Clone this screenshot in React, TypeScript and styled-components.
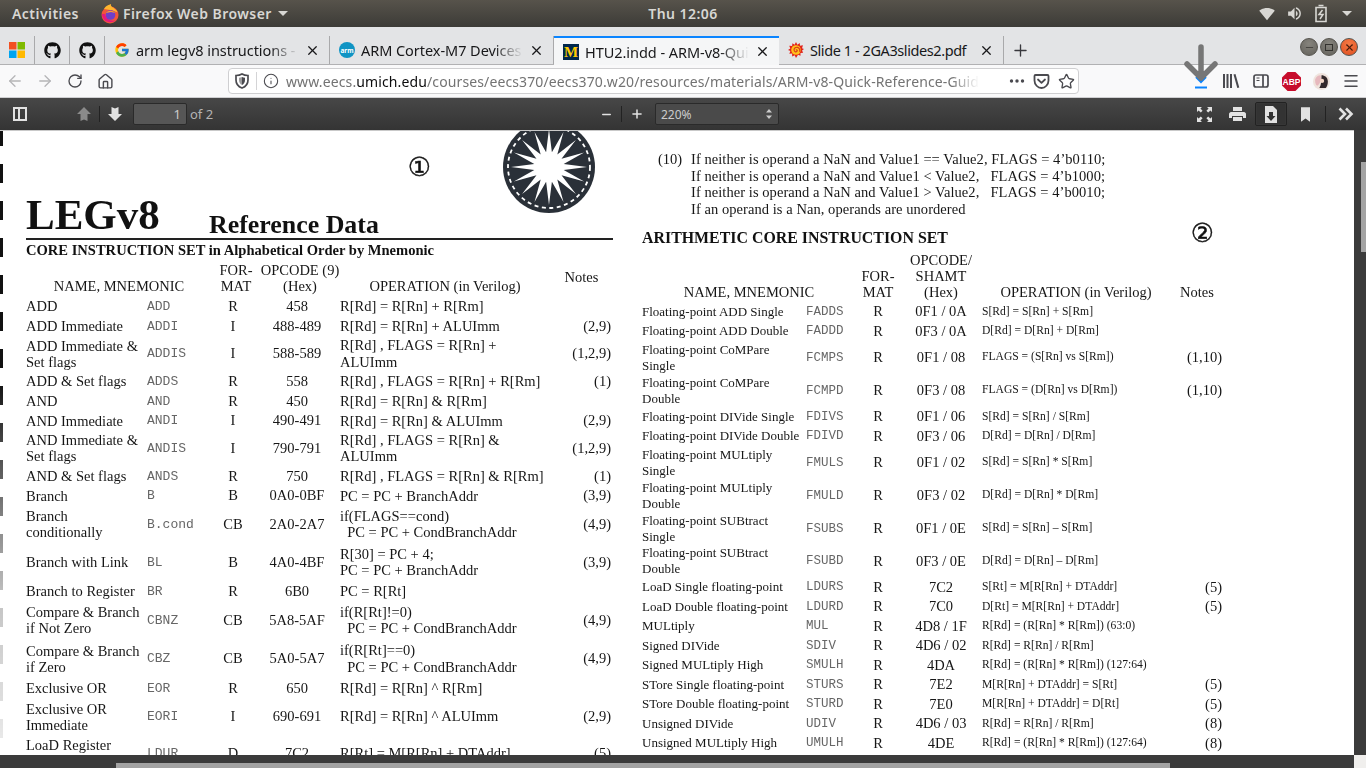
import React from "react";
import styled, { createGlobalStyle } from "styled-components";
import { FaGithub } from "react-icons/fa";
import { FcGoogle } from "react-icons/fc";
import { MdSignalWifi4Bar, MdVolumeUp } from "react-icons/md";
import { ArrowLeft, ArrowRight, Home, Info, Menu, RotateCw, Star, X, Plus, Minus } from "lucide-react";

const SERIF = `"Liberation Serif", "Times New Roman", serif`;
const MONO = `"Liberation Mono", "Courier New", monospace`;
const UI = `"Noto Sans", "Open Sans", sans-serif`;

const GlobalStyle = createGlobalStyle`
  html, body { margin: 0; padding: 0; overflow: hidden; background: #fff; }
  * { box-sizing: border-box; }
`;

const Screen = styled.div`
  width: 1366px;
  height: 768px;
  display: flex;
  flex-direction: column;
  overflow: hidden;
  position: relative;
  font-family: ${UI};
`;

/* ---------- ubuntu top bar ---------- */
const TopBar = styled.div`
  height: 27px;
  flex: none;
  display: grid;
  grid-template-columns: 1fr auto 1fr;
  align-items: center;
  padding: 0 12px;
  background: linear-gradient(#57534b, #3c3b37);
  color: #d8d7d3;
  font-size: 14px;
  font-weight: 600;
  letter-spacing: 0.45px;
`;

const TopLeft = styled.div`
  display: flex;
  align-items: center;
`;

const FoxLabel = styled.span`
  margin-left: 21px;
  display: flex;
  align-items: center;
  gap: 3px;
`;

const TopRight = styled.div`
  display: flex;
  justify-content: flex-end;
  align-items: center;
  gap: 11px;
  padding-right: 2px;
`;

const Caret = styled.span`
  width: 0;
  height: 0;
  margin-left: 3px;
  border-left: 5px solid transparent;
  border-right: 5px solid transparent;
  border-top: 5px solid #d8d7d3;
`;

/* ---------- firefox tabs ---------- */
const TabStrip = styled.div`
  height: 38px;
  flex: none;
  display: flex;
  align-items: flex-end;
  background: #e3e4e6;
  border-bottom: 1px solid #b1b1b3;
`;

const PinnedTab = styled.div`
  width: 35px;
  height: 28px;
  display: flex;
  align-items: center;
  justify-content: center;
  border-right: 1px solid #a9a9ab;
  color: #111;
`;

const Tab = styled.div<{ $active?: boolean; $w: number }>`
  width: ${(p) => p.$w}px;
  height: ${(p) => (p.$active ? 29 : 28)}px;
  margin-bottom: ${(p) => (p.$active ? -1 : 0)}px;
  display: flex;
  align-items: center;
  padding: 0 9px 0 9px;
  gap: 6px;
  font-size: 14.5px;
  color: #18181a;
  background: ${(p) => (p.$active ? "#f5f6f7" : "transparent")};
  border-top: ${(p) => (p.$active ? "2px solid #0a84ff" : "0")};
  border-right: ${(p) => (p.$active ? "0" : "1px solid #a9a9ab")};
`;

const TabTitle = styled.span<{ $fade?: boolean; $tight?: boolean }>`
  flex: 1;
  white-space: nowrap;
  overflow: hidden;
  letter-spacing: ${(p) => (p.$tight ? -0.42 : -0.05)}px;
  ${(p) =>
    p.$fade &&
    "mask-image: linear-gradient(to right, #000 82%, transparent 100%);"}
`;

const Favicon = styled.span`
  width: 16px;
  height: 16px;
  flex: none;
  display: flex;
  align-items: center;
  justify-content: center;
`;

const ArmIcon = styled(Favicon)`
  border-radius: 50%;
  background: #0f94c4;
  color: #fff;
  font-size: 6.5px;
  font-weight: 700;
`;

const MichiganIcon = styled(Favicon)`
  background: #00274c;
  color: #ffcb05;
  font-family: ${SERIF};
  font-size: 15px;
  font-weight: 700;
  line-height: 16px;
`;

const NewTab = styled.div`
  width: 32px;
  height: 28px;
  display: flex;
  align-items: center;
  justify-content: center;
  color: #38383d;
`;

const WindowButtons = styled.div`
  margin-left: auto;
  align-self: flex-start;
  display: flex;
  gap: 2px;
  margin-top: 11px;
  margin-right: 8px;
`;

const WindowButton = styled.div<{ $close?: boolean }>`
  width: 18px;
  height: 18px;
  border-radius: 50%;
  border: 1px solid #55534d;
  background: ${(p) =>
    p.$close
      ? "radial-gradient(circle at 50% 30%, #f47a45, #df4f20)"
      : "radial-gradient(circle at 50% 30%, #86847d, #63615b)"};
  display: flex;
  align-items: center;
  justify-content: center;
  color: ${(p) => (p.$close ? "#4a1c0c" : "#33322e")};
`;

const MaxGlyph = styled.span`
  width: 8px;
  height: 7px;
  border: 1px solid #33322e;
`;

/* ---------- navigation bar ---------- */
const NavBar = styled.div`
  height: 33px;
  flex: none;
  display: flex;
  align-items: center;
  background: #f9f9fa;
  border-bottom: 1px solid #cfcfd1;
`;

const NavButton = styled.div<{ $dim?: boolean }>`
  width: 30px;
  height: 30px;
  flex: none;
  display: flex;
  align-items: center;
  justify-content: center;
  color: ${(p) => (p.$dim ? "#b5b5b7" : "#4a4a4f")};
`;

const UrlBar = styled.div`
  width: 851px;
  height: 26px;
  margin-left: 108px;
  display: flex;
  align-items: center;
  background: #fff;
  border: 1px solid #cfcfd1;
  border-radius: 4px;
  color: #4a4a4f;
  padding: 0 1px 0 5px;
`;

const UrlIcon = styled.span`
  width: 16px;
  height: 16px;
  margin-left: 0;
  flex: none;
  display: flex;
  align-items: center;
  justify-content: center;
`;

const UrlDivider = styled.span`
  width: 1px;
  height: 18px;
  background: #d4d4d6;
  margin: 0 6px 0 6px;
`;

const UrlText = styled.div`
  width: 693px;
  margin-left: 7px;
  white-space: nowrap;
  overflow: hidden;
  font-size: 14px;
  letter-spacing: 0.12px;
  color: #737373;
  mask-image: linear-gradient(to right, #000 96%, transparent 100%);
  b {
    font-weight: 400;
    color: #0c0c0d;
  }
`;

const UrlActions = styled.div`
  margin-left: auto;
  display: flex;
  align-items: center;
  gap: 8px;
  padding-right: 2px;
`;

const NavRight = styled.div`
  margin-left: auto;
  display: flex;
  align-items: center;
`;

/* overlay arrow pasted on the screenshot */
const PointerArrow = styled.svg`
  position: absolute;
  left: 1181px;
  top: 42px;
`;

/* ---------- pdf.js toolbar ---------- */
const PdfToolbar = styled.div`
  height: 32px;
  flex: none;
  display: flex;
  align-items: center;
  padding: 0 5px;
  background: linear-gradient(#474747, #343434);
  color: #e2e2e2;
`;

const ToolButton = styled.div<{ $boxed?: boolean; $w?: number }>`
  width: ${(p) => p.$w ?? 30}px;
  height: 24px;
  flex: none;
  display: flex;
  align-items: center;
  justify-content: center;
  border-radius: 2px;
  ${(p) =>
    p.$boxed &&
    "border: 1px solid #222; background: #333; box-shadow: inset 0 0 1px #555;"}
`;

const ToolDivider = styled.span`
  width: 1px;
  height: 16px;
  flex: none;
  background: #222;
`;

const WideDivider = styled(ToolDivider)`
  margin: 0 2px 0 2px;
`;

const PageGroup = styled.div`
  width: 522px;
  margin-left: 34px;
  display: flex;
  align-items: center;
`;

const PageInput = styled.div`
  width: 54px;
  height: 22px;
  margin-left: 3px;
  padding-right: 5px;
  text-align: right;
  line-height: 20px;
  font-size: 13px;
  color: #ccc;
  background: #565656;
  border: 1px solid #2a2a2a;
  border-radius: 2px;
`;

const PageCount = styled.span`
  margin-left: 3px;
  font-size: 13px;
  color: #b4b4b4;
`;

const ZoomGroup = styled.div`
  display: flex;
  align-items: center;
`;

const ZoomSelect = styled.div`
  width: 124px;
  height: 22px;
  margin-left: 3px;
  padding: 0 5px;
  display: flex;
  align-items: center;
  justify-content: space-between;
  font-size: 12px;
  color: #ccc;
  background: #4a4a4a;
  border: 1px solid #2a2a2a;
  border-radius: 2px;
`;

const RightTools = styled.div`
  margin-left: auto;
  display: flex;
  align-items: center;
  gap: 3px;
`;

/* ---------- document ---------- */
const Viewer = styled.div`
  flex: 1;
  min-height: 0;
  display: flex;
`;

const Sheet = styled.div`
  flex: 1;
  position: relative;
  display: flex;
  overflow: hidden;
  background: #fff;
  border-top: 1px solid #c9c9c9;
  font-family: ${SERIF};
  font-size: 14.5px;
  color: #161616;

  &::before {
    content: "";
    position: absolute;
    left: 0;
    top: -4px;
    bottom: 0;
    width: 2.5px;
    background: repeating-linear-gradient(#111 0 19px, transparent 19px 37px);
    mask-image: linear-gradient(#000 40%, rgba(0, 0, 0, 0.25) 75%, rgba(0, 0, 0, 0.08));
  }
`;

const LeftPage = styled.div`
  width: 642px;
  flex: none;
  padding: 0 29px 0 26px;
  filter: blur(0.3px);
`;

const RightPage = styled.div`
  flex: 1;
  padding-top: 20px;
  filter: blur(0.3px);
`;

const SealRow = styled.div`
  height: 69px;
  display: flex;
  justify-content: flex-end;
  gap: 72px;
  padding-right: 18px;
`;

const CircledDigit = styled.span`
  font-family: "DejaVu Sans", sans-serif;
  font-size: 26px;
  line-height: 24px;
  color: #111;
  -webkit-text-stroke: 0.4px #111;
`;

const FirstDigit = styled(CircledDigit)`
  margin-top: 24px;
`;

const SecondDigit = styled(CircledDigit)`
  margin-top: -8px;
`;

const Seal = styled.svg`
  flex: none;
`;

const TitleRow = styled.div`
  height: 40px;
  display: flex;
  align-items: flex-end;
  border-bottom: 2px solid #222;
  color: #111;
`;

const BigTitle = styled.span`
  width: 183px;
  font-size: 43px;
  font-weight: 700;
  line-height: 40px;
  margin-bottom: 3px;
`;

const SubTitle = styled.span`
  font-size: 25.9px;
  font-weight: 700;
  line-height: 27px;
`;

const SectionTitle = styled.div`
  height: 19px;
  line-height: 21px;
  font-size: 14.55px;
  font-weight: 700;
  color: #111;
`;

const Grid = styled.div<{ $cols: string }>`
  display: grid;
  grid-template-columns: ${(p) => p.$cols};
`;

const LEFT_COLS = "121px 65px 42px 86px 210px 63px";
const RIGHT_COLS = "164px 50px 44px 82px 188px 54px";

const HeadRow = styled(Grid)<{ $h: number }>`
  height: ${(p) => p.$h}px;
  align-items: end;
  text-align: center;
  line-height: 16px;
  padding-bottom: 2px;
  white-space: nowrap;
`;

const HeadName = styled.div`
  grid-column: span 2;
`;

// the two narrow heads sit a little right of the values below them
const HeadStack = styled.div<{ $shift?: number }>`
  padding-left: ${(p) => p.$shift ?? 0}px;
`;

const HeadNotes = styled.div<{ $middle?: boolean }>`
  ${(p) => p.$middle && "align-self: center;"}
`;

const Row = styled(Grid)<{ $h: number }>`
  height: ${(p) => p.$h}px;
  align-items: center;
`;

const NameCell = styled.div<{ $small?: boolean }>`
  white-space: pre;
  line-height: 16px;
  font-size: ${(p) => (p.$small ? 13 : 14.5)}px;
`;

const MnemonicCell = styled.div<{ $small?: boolean }>`
  font-family: ${MONO};
  font-size: ${(p) => (p.$small ? 12.5 : 13)}px;
  color: #666;
`;

const CenterCell = styled.div`
  text-align: center;
`;

const OpCell = styled.div<{ $small?: boolean }>`
  white-space: pre;
  line-height: 16.5px;
  font-size: ${(p) => (p.$small ? 11.6 : 14.5)}px;
`;

const NotesCell = styled.div`
  text-align: right;
  padding-right: 2px;
`;

const Footnote = styled.div`
  display: flex;
  padding-left: 16px;
  line-height: 16.5px;
`;

const FootnoteMark = styled.span`
  width: 33px;
`;

const FootnoteLine = styled.div`
  white-space: pre;
  letter-spacing: 0.06px;
`;

const ArithHead = styled.div`
  width: 572px;
  height: 18px;
  margin-top: 12px;
  display: flex;
  justify-content: space-between;
  align-items: flex-start;
`;

const ArithTitle = styled.span`
  font-size: 15.9px;
  font-weight: 700;
  line-height: 18px;
  color: #111;
`;

/* ---------- scrollbars ---------- */
const VScroll = styled.div`
  width: 12px;
  flex: none;
  padding: 32px 0 0 7px;
  background: #3b3b3b;
`;

const VThumb = styled.div`
  height: 90px;
  background: #a3a3a3;
`;

const HScroll = styled.div`
  height: 13px;
  flex: none;
  display: flex;
  background: #3b3b3b;
`;

const HTrack = styled.div`
  flex: 1;
  padding: 8px 0 0 116px;
`;

const HThumb = styled.div`
  width: 1054px;
  height: 5px;
  background: #a3a3a3;
`;

const ScrollCorner = styled.div`
  width: 12px;
  background: #f0efed;
`;

type Entry = {
  name: string;
  mn: string;
  fmt: string;
  code: string;
  op: string;
  notes?: string;
  h: number;
};

const CORE: Entry[] = [
  { name: "ADD", mn: "ADD", fmt: "R", code: "458", op: "R[Rd] = R[Rn] + R[Rm]", h: 20 },
  { name: "ADD Immediate", mn: "ADDI", fmt: "I", code: "488-489", op: "R[Rd] = R[Rn] + ALUImm", notes: "(2,9)", h: 20 },
  { name: "ADD Immediate &\nSet flags", mn: "ADDIS", fmt: "I", code: "588-589", op: "R[Rd] , FLAGS = R[Rn] +\nALUImm", notes: "(1,2,9)", h: 35 },
  { name: "ADD & Set flags", mn: "ADDS", fmt: "R", code: "558", op: "R[Rd] , FLAGS = R[Rn] + R[Rm]", notes: "(1)", h: 20 },
  { name: "AND", mn: "AND", fmt: "R", code: "450", op: "R[Rd] = R[Rn] & R[Rm]", h: 20 },
  { name: "AND Immediate", mn: "ANDI", fmt: "I", code: "490-491", op: "R[Rd] = R[Rn] & ALUImm", notes: "(2,9)", h: 19.5 },
  { name: "AND Immediate &\nSet flags", mn: "ANDIS", fmt: "I", code: "790-791", op: "R[Rd] , FLAGS = R[Rn] &\nALUImm", notes: "(1,2,9)", h: 35.5 },
  { name: "AND & Set flags", mn: "ANDS", fmt: "R", code: "750", op: "R[Rd] , FLAGS = R[Rn] & R[Rm]", notes: "(1)", h: 20 },
  { name: "Branch", mn: "B", fmt: "B", code: "0A0-0BF", op: "PC = PC + BranchAddr", notes: "(3,9)", h: 19.5 },
  { name: "Branch\nconditionally", mn: "B.cond", fmt: "CB", code: "2A0-2A7", op: "if(FLAGS==cond)\n  PC = PC + CondBranchAddr", notes: "(4,9)", h: 37.5 },
  { name: "Branch with Link", mn: "BL", fmt: "B", code: "4A0-4BF", op: "R[30] = PC + 4;\nPC = PC + BranchAddr", notes: "(3,9)", h: 38 },
  { name: "Branch to Register", mn: "BR", fmt: "R", code: "6B0", op: "PC = R[Rt]", h: 20 },
  { name: "Compare & Branch\nif Not Zero", mn: "CBNZ", fmt: "CB", code: "5A8-5AF", op: "if(R[Rt]!=0)\n  PC = PC + CondBranchAddr", notes: "(4,9)", h: 38 },
  { name: "Compare & Branch\nif Zero", mn: "CBZ", fmt: "CB", code: "5A0-5A7", op: "if(R[Rt]==0)\n  PC = PC + CondBranchAddr", notes: "(4,9)", h: 39 },
  { name: "Exclusive OR", mn: "EOR", fmt: "R", code: "650", op: "R[Rd] = R[Rn] ^ R[Rm]", h: 20 },
  { name: "Exclusive OR\nImmediate", mn: "EORI", fmt: "I", code: "690-691", op: "R[Rd] = R[Rn] ^ ALUImm", notes: "(2,9)", h: 37 },
  { name: "LoaD Register\nUnscaled offset", mn: "LDUR", fmt: "D", code: "7C2", op: "R[Rt] = M[R[Rn] + DTAddr]", notes: "(5)", h: 36 },
];

const ARITH: Entry[] = [
  { name: "Floating-point ADD Single", mn: "FADDS", fmt: "R", code: "0F1 / 0A", op: "S[Rd] = S[Rn] + S[Rm]", h: 19.5 },
  { name: "Floating-point ADD Double", mn: "FADDD", fmt: "R", code: "0F3 / 0A", op: "D[Rd] = D[Rn] + D[Rm]", h: 19.5 },
  { name: "Floating-point CoMPare\nSingle", mn: "FCMPS", fmt: "R", code: "0F1 / 08", op: "FLAGS = (S[Rn] vs S[Rm])", notes: "(1,10)", h: 33 },
  { name: "Floating-point CoMPare\nDouble", mn: "FCMPD", fmt: "R", code: "0F3 / 08", op: "FLAGS = (D[Rn] vs D[Rm])", notes: "(1,10)", h: 33 },
  { name: "Floating-point DIVide Single", mn: "FDIVS", fmt: "R", code: "0F1 / 06", op: "S[Rd] = S[Rn] / S[Rm]", h: 19.5 },
  { name: "Floating-point DIVide Double", mn: "FDIVD", fmt: "R", code: "0F3 / 06", op: "D[Rd] = D[Rn] / D[Rm]", h: 19.5 },
  { name: "Floating-point MULtiply\nSingle", mn: "FMULS", fmt: "R", code: "0F1 / 02", op: "S[Rd] = S[Rn] * S[Rm]", h: 33 },
  { name: "Floating-point MULtiply\nDouble", mn: "FMULD", fmt: "R", code: "0F3 / 02", op: "D[Rd] = D[Rn] * D[Rm]", h: 33 },
  { name: "Floating-point SUBtract\nSingle", mn: "FSUBS", fmt: "R", code: "0F1 / 0E", op: "S[Rd] = S[Rn] \u2013 S[Rm]", h: 33 },
  { name: "Floating-point SUBtract\nDouble", mn: "FSUBD", fmt: "R", code: "0F3 / 0E", op: "D[Rd] = D[Rn] \u2013 D[Rm]", h: 32.5 },
  { name: "LoaD Single floating-point", mn: "LDURS", fmt: "R", code: "7C2", op: "S[Rt] = M[R[Rn] + DTAddr]", notes: "(5)", h: 19.5 },
  { name: "LoaD Double floating-point", mn: "LDURD", fmt: "R", code: "7C0", op: "D[Rt] = M[R[Rn] + DTAddr]", notes: "(5)", h: 19.5 },
  { name: "MULtiply", mn: "MUL", fmt: "R", code: "4D8 / 1F", op: "R[Rd] = (R[Rn] * R[Rm]) (63:0)", h: 19.5 },
  { name: "Signed DIVide", mn: "SDIV", fmt: "R", code: "4D6 / 02", op: "R[Rd] = R[Rn] / R[Rm]", h: 19.5 },
  { name: "Signed MULtiply High", mn: "SMULH", fmt: "R", code: "4DA", op: "R[Rd] = (R[Rn] * R[Rm]) (127:64)", h: 19.5 },
  { name: "STore Single floating-point", mn: "STURS", fmt: "R", code: "7E2", op: "M[R[Rn] + DTAddr] = S[Rt]", notes: "(5)", h: 19.5 },
  { name: "STore Double floating-point", mn: "STURD", fmt: "R", code: "7E0", op: "M[R[Rn] + DTAddr] = D[Rt]", notes: "(5)", h: 19.5 },
  { name: "Unsigned DIVide", mn: "UDIV", fmt: "R", code: "4D6 / 03", op: "R[Rd] = R[Rn] / R[Rm]", notes: "(8)", h: 19.5 },
  { name: "Unsigned MULtiply High", mn: "UMULH", fmt: "R", code: "4DE", op: "R[Rd] = (R[Rn] * R[Rm]) (127:64)", notes: "(8)", h: 19.5 },
];

// 16 point star for the seal
const starPoints = Array.from({ length: 32 }, (_, i) => {
  const r = i % 2 === 0 ? 38 : 15;
  const a = (i * Math.PI) / 16 - Math.PI / 2;
  return `${(46 + r * Math.cos(a)).toFixed(1)},${(46 + r * Math.sin(a)).toFixed(1)}`;
}).join(" ");

const FirefoxLogo = () => (
  <svg width="20" height="20" viewBox="0 0 20 20">
    <circle cx="10" cy="11" r="8.5" fill="#f0553a" />
    <path d="M4 5 C6 1 9 1 11 0 C10 3 14 3 17 7 C18 10 14 6 10 6 Z" fill="#ffb52e" />
    <path d="M2 10 C2 17 10 21 16 16 C11 18 6 15 5 10 Z" fill="#e5197d" />
    <circle cx="10.5" cy="11" r="4.8" fill="#6e3fc9" />
    <path d="M6 9 C8 6 13 6 15 9 L11 8 Z" fill="#ff9a2e" />
  </svg>
);

const BatteryIcon = () => (
  <svg width="14" height="19" viewBox="0 0 14 19" fill="none" stroke="#d8d7d3" strokeWidth="1.6">
    <path d="M4.5 1.5h5M2 3.5h10v14H2z" />
    <path d="M8.5 6 L5 10.5h4L6 15" strokeWidth="1.5" />
  </svg>
);

const MicrosoftIcon = () => (
  <svg width="16" height="16" viewBox="0 0 16 16">
    <rect width="7.5" height="7.5" fill="#f25022" />
    <rect x="8.5" width="7.5" height="7.5" fill="#7fba00" />
    <rect y="8.5" width="7.5" height="7.5" fill="#00a4ef" />
    <rect x="8.5" y="8.5" width="7.5" height="7.5" fill="#ffb900" />
  </svg>
);

const SlideIcon = () => (
  <svg width="18" height="18" viewBox="0 0 18 18">
    <path
      d="M9 0l1.6 3 2.6-2 .3 3.3 3.300-.6-1 3.200 2.200 1.100-2.200 1.700 1.200 2.500-3 .2.100 3.100-2.800-1.200L9 18l-1.500-3.200-2.800 1.500-.1-3.300-3.100.1 1.200-2.900L0 9l2.600-1.700-1.200-3 3.200.2L5 1.500l2.400 1.700z"
      fill="#e2231a"
    />
    <circle cx="9" cy="9" r="5.400" fill="#ffc21a" />
    <path d="M9 9c1-1 2 .5 1 1.500S7 11 6.800 9s2-3.500 4-3 3 3 2.200 5" fill="none" stroke="#d9381e" strokeWidth="1.300" />
  </svg>
);

const ShieldIcon = () => (
  <svg width="16" height="16" viewBox="0 0 16 16">
    <path d="M8 1 C10 2.200 12 2.500 14 2.500 V7 C14 11 11.500 13.800 8 15 C4.500 13.800 2 11 2 7 V2.500 C4 2.500 6 2.200 8 1 Z" fill="none" stroke="#4a4a4f" strokeWidth="1.700" />
    <path d="M8 4 C9 4.500 10 4.800 11 4.800 V7 C11 9.500 9.800 11 8 12 Z" fill="#4a4a4f" />
    <path d="M8 4 C7 4.500 6 4.800 5 4.800 V7 C5 9.500 6.200 11 8 12 Z" fill="#4a4a4f" opacity=".55" />
  </svg>
);

const DotsIcon = () => (
  <svg width="16" height="16" viewBox="0 0 16 16" fill="#4a4a4f">
    <circle cx="2.500" cy="8" r="1.700" />
    <circle cx="8" cy="8" r="1.700" />
    <circle cx="13.500" cy="8" r="1.700" />
  </svg>
);

const PocketIcon = () => (
  <svg width="17" height="17" viewBox="0 0 17 17" fill="none" stroke="#4a4a4f" strokeWidth="1.800">
    <path d="M2.500 2h12c.6 0 1 .4 1 1v4.500c0 4-3.200 7.500-7 7.500s-7-3.500-7-7.500V3c0-.6.400-1 1-1z" />
    <path d="M5 6.500l3.500 3.300L12 6.500" strokeLinecap="round" strokeLinejoin="round" />
  </svg>
);

const DownloadIcon = () => (
  <svg width="16" height="16" viewBox="0 0 16 16" fill="none" stroke="#0a84ff">
    <path d="M3 4l5 5 5-5" strokeWidth="2" />
    <path d="M2 14.500h12" strokeWidth="2" />
  </svg>
);

const LibraryIcon = () => (
  <svg width="18" height="16" viewBox="0 0 18 16" fill="#4a4a4f">
    <rect x="1" y="1" width="2" height="14" />
    <rect x="4.500" y="1" width="2" height="14" />
    <rect x="8" y="1" width="2" height="14" />
    <path d="M11.500 1.500l2-.6 3.800 13.600-2 .6z" />
  </svg>
);

const SidebarIcon = () => (
  <svg width="16" height="16" viewBox="0 0 16 16" fill="none" stroke="#4a4a4f" strokeWidth="1.700">
    <rect x="1" y="2" width="14" height="12" rx="2" />
    <path d="M10 2v12" />
    <path d="M3.500 5h3M3.500 7.500h3" strokeWidth="1" />
  </svg>
);

const AbpIcon = () => (
  <svg width="19" height="19" viewBox="0 0 17 17">
    <path d="M5 0h7l5 5v7l-5 5H5l-5-5V5z" fill="#c70d2c" />
    <text x="8.500" y="11.300" textAnchor="middle" fontSize="7.600" fontWeight="700" fontFamily="Liberation Sans, sans-serif" fill="#fff">
      ABP
    </text>
  </svg>
);

const AvatarIcon = () => (
  <svg width="17" height="17" viewBox="0 0 16 16">
    <circle cx="8" cy="8" r="8" fill="#efe3dc" />
    <path d="M8 2c3 0 6 2 6 6 0 3-1 5-2 6H6c2-3 2-8 2-12z" fill="#33282a" />
    <path d="M2 6c1-3 3-4 5-4 1 3 0 8-3 10-2-1-2-4-2-6z" fill="#e6b8bd" />
    <circle cx="8.500" cy="7.500" r="2" fill="#f2d6c6" />
  </svg>
);

const SidebarToggleIcon = () => (
  <svg width="16" height="16" viewBox="0 0 16 16">
    <path d="M1 1h14v14H1z M3 3v10h3V3z M8 3v10h5V3z" fill="#e2e2e2" fillRule="evenodd" />
  </svg>
);

const PageArrow = ({ up }: { up?: boolean }) => (
  <svg width="16" height="16" viewBox="0 0 16 16">
    <path
      d={up ? "M8 1l7 7h-3.500v7L8 13.500 4.500 15V8H1z" : "M8 15L1 8h3.500V1L8 2.500 11.500 1v7H15z"}
      fill={up ? "#8a8a8a" : "#e2e2e2"}
    />
  </svg>
);

const FullscreenIcon = () => (
  <svg width="15" height="15" viewBox="0 0 15 15" fill="#e2e2e2">
    <path d="M0 0h5L3.400 1.600 5.600 3.800 3.800 5.600 1.600 3.400 0 5z" />
    <path d="M15 0v5l-1.600-1.600-2.200 2.200-1.800-1.800 2.200-2.200L10 0z" />
    <path d="M0 15v-5l1.600 1.600 2.200-2.200 1.800 1.800-2.200 2.200L5 15z" />
    <path d="M15 15h-5l1.600-1.600-2.200-2.200 1.800-1.800 2.200 2.200L15 10z" />
  </svg>
);

const PrintIcon = () => (
  <svg width="17" height="16" viewBox="0 0 17 16" fill="#e2e2e2">
    <path d="M4 1h9v4H4z" />
    <path d="M2 6h13c1 0 2 1 2 2v4h-3v-2H3v2H0V8c0-1 1-2 2-2z" />
    <path d="M4 11h9v4H4z" />
  </svg>
);

const SaveIcon = () => (
  <svg width="14" height="17" viewBox="0 0 14 17">
    <path d="M1 0h8l4 4v13H1z" fill="#e2e2e2" />
    <path d="M5 6h4v4h2.500L7 15 2.500 10H5z" fill="#333" />
  </svg>
);

const BookmarkIcon = () => (
  <svg width="9" height="15" viewBox="0 0 10 16">
    <path d="M0 0h10v16L5 12.500 0 16z" fill="#e2e2e2" />
  </svg>
);

const DoubleChevron = () => (
  <svg width="16" height="14" viewBox="0 0 16 14" fill="none" stroke="#e2e2e2" strokeWidth="2.600">
    <path d="M1.500 1.500L7 7l-5.500 5.500" />
    <path d="M8 1.500L13.500 7 8 12.500" />
  </svg>
);

const UpDown = () => (
  <svg width="8" height="12" viewBox="0 0 8 12" fill="#ccc">
    <path d="M4 1l3 3.500H1zM4 11L1 7.500h6z" />
  </svg>
);

const rowsOf = (entries: Entry[], cols: string, small?: boolean) =>
  entries.map((e) => (
    <Row key={e.mn} $cols={cols} $h={e.h}>
      <NameCell $small={small}>{e.name}</NameCell>
      <MnemonicCell $small={small}>{e.mn}</MnemonicCell>
      <CenterCell>{e.fmt}</CenterCell>
      <CenterCell>{e.code}</CenterCell>
      <OpCell $small={small}>{e.op}</OpCell>
      <NotesCell>{e.notes}</NotesCell>
    </Row>
  ));

const App: React.FC = () => (
  <Screen>
    <GlobalStyle />
    <TopBar>
      <TopLeft>
        Activities
        <FoxLabel>
          <FirefoxLogo />
          Firefox Web Browser
          <Caret />
        </FoxLabel>
      </TopLeft>
      <span>Thu 12:06</span>
      <TopRight>
        <MdSignalWifi4Bar size={16} />
        <MdVolumeUp size={17} />
        <BatteryIcon />
        <Caret />
      </TopRight>
    </TopBar>

    <TabStrip>
      <PinnedTab>
        <MicrosoftIcon />
      </PinnedTab>
      <PinnedTab>
        <FaGithub size={17} />
      </PinnedTab>
      <PinnedTab>
        <FaGithub size={17} />
      </PinnedTab>
      <Tab $w={225}>
        <Favicon>
          <FcGoogle size={16} />
        </Favicon>
        <TabTitle $fade>arm legv8 instructions - Google Search</TabTitle>
        <X size={15} strokeWidth={2} />
      </Tab>
      <Tab $w={224}>
        <ArmIcon>arm</ArmIcon>
        <TabTitle $fade>ARM Cortex-M7 Devices Generic User Guide</TabTitle>
        <X size={15} strokeWidth={2} />
      </Tab>
      <Tab $w={225} $active>
        <MichiganIcon>M</MichiganIcon>
        <TabTitle $fade>HTU2.indd - ARM-v8-Quick-Reference-Guide</TabTitle>
        <X size={15} strokeWidth={2} />
      </Tab>
      <Tab $w={225}>
        <Favicon>
          <SlideIcon />
        </Favicon>
        <TabTitle $tight>Slide 1 - 2GA3slides2.pdf</TabTitle>
        <X size={15} strokeWidth={2} />
      </Tab>
      <NewTab>
        <Plus size={19} strokeWidth={1.7} />
      </NewTab>
      <WindowButtons>
        <WindowButton>
          <Minus size={11} strokeWidth={1.6} />
        </WindowButton>
        <WindowButton>
          <MaxGlyph />
        </WindowButton>
        <WindowButton $close>
          <X size={11} strokeWidth={2.4} />
        </WindowButton>
      </WindowButtons>
    </TabStrip>

    <NavBar>
      <NavButton $dim>
        <ArrowLeft size={18} strokeWidth={1.7} />
      </NavButton>
      <NavButton $dim>
        <ArrowRight size={18} strokeWidth={1.7} />
      </NavButton>
      <NavButton>
        <RotateCw size={16} strokeWidth={2} />
      </NavButton>
      <NavButton>
        <Home size={17} strokeWidth={2} />
      </NavButton>
      <UrlBar>
        <UrlIcon>
          <ShieldIcon />
        </UrlIcon>
        <UrlDivider />
        <UrlIcon>
          <Info size={16} strokeWidth={1.6} />
        </UrlIcon>
        <UrlText>
          www.eecs.<b>umich.edu</b>/courses/eecs370/eecs370.w20/resources/materials/ARM-v8-Quick-Reference-Guide.pdf
        </UrlText>
        <UrlActions>
          <DotsIcon />
          <PocketIcon />
          <Star size={17} strokeWidth={1.9} />
        </UrlActions>
      </UrlBar>
      <NavRight>
        <NavButton>
          <DownloadIcon />
        </NavButton>
        <NavButton>
          <LibraryIcon />
        </NavButton>
        <NavButton>
          <SidebarIcon />
        </NavButton>
        <NavButton>
          <AbpIcon />
        </NavButton>
        <NavButton>
          <AvatarIcon />
        </NavButton>
        <NavButton>
          <Menu size={18} strokeWidth={2} />
        </NavButton>
      </NavRight>
    </NavBar>

    <PointerArrow width="40" height="40" viewBox="0 0 40 40" fill="none" stroke="#767676" strokeWidth="5.500" strokeLinecap="round" strokeLinejoin="round">
      <path d="M20 5v31M6 22l14 14 14-14" />
    </PointerArrow>

    <PdfToolbar>
      <ToolButton>
        <SidebarToggleIcon />
      </ToolButton>
      <PageGroup>
        <ToolButton>
          <PageArrow up />
        </ToolButton>
        <ToolDivider />
        <ToolButton>
          <PageArrow />
        </ToolButton>
        <PageInput>1</PageInput>
        <PageCount>of 2</PageCount>
      </PageGroup>
      <ZoomGroup>
        <ToolButton>
          <Minus size={13} strokeWidth={2.6} />
        </ToolButton>
        <ToolDivider />
        <ToolButton>
          <Plus size={14} strokeWidth={2.6} />
        </ToolButton>
        <ZoomSelect>
          220%
          <UpDown />
        </ZoomSelect>
      </ZoomGroup>
      <RightTools>
        <ToolButton>
          <FullscreenIcon />
        </ToolButton>
        <ToolButton>
          <PrintIcon />
        </ToolButton>
        <ToolButton $boxed $w={32}>
          <SaveIcon />
        </ToolButton>
        <ToolButton>
          <BookmarkIcon />
        </ToolButton>
        <WideDivider />
        <ToolButton>
          <DoubleChevron />
        </ToolButton>
      </RightTools>
    </PdfToolbar>

    <Viewer>
      <Sheet>
        <LeftPage>
          <SealRow>
            <FirstDigit>{"\u2460"}</FirstDigit>
            <Seal width="92" height="82" viewBox="0 10 92 82">
              <circle cx="46" cy="46" r="46" fill="#2a3038" />
              <circle cx="46" cy="46" r="41" fill="none" stroke="#fff" strokeWidth="1.800" strokeDasharray="4 3.500" />
              <polygon points={starPoints} fill="#fff" />
            </Seal>
          </SealRow>
          <TitleRow>
            <BigTitle>LEGv8</BigTitle>
            <SubTitle>Reference Data</SubTitle>
          </TitleRow>
          <SectionTitle>CORE INSTRUCTION SET in Alphabetical Order by Mnemonic</SectionTitle>
          <HeadRow $cols={LEFT_COLS} $h={37}>
            <HeadName>NAME, MNEMONIC</HeadName>
            <HeadStack $shift={6}>
              FOR-
              <br />
              MAT
            </HeadStack>
            <HeadStack $shift={6}>
              OPCODE (9)
              <br />
              (Hex)
            </HeadStack>
            <div>OPERATION (in Verilog)</div>
            <HeadNotes $middle>Notes</HeadNotes>
          </HeadRow>
          {rowsOf(CORE, LEFT_COLS)}
        </LeftPage>
        <RightPage>
          <Footnote>
            <FootnoteMark>(10)</FootnoteMark>
            <div>
              <FootnoteLine>If neither is operand a NaN and Value1 == Value2, FLAGS = 4’b0110;</FootnoteLine>
              <FootnoteLine>If neither is operand a NaN and Value1 &lt; Value2,   FLAGS = 4’b1000;</FootnoteLine>
              <FootnoteLine>If neither is operand a NaN and Value1 &gt; Value2,   FLAGS = 4’b0010;</FootnoteLine>
              <FootnoteLine>If an operand is a Nan, operands are unordered</FootnoteLine>
            </div>
          </Footnote>
          <ArithHead>
            <ArithTitle>ARITHMETIC CORE INSTRUCTION SET</ArithTitle>
            <SecondDigit>{"\u2461"}</SecondDigit>
          </ArithHead>
          <HeadRow $cols={RIGHT_COLS} $h={55}>
            <HeadName>NAME, MNEMONIC</HeadName>
            <HeadStack>
              FOR-
              <br />
              MAT
            </HeadStack>
            <HeadStack>
              OPCODE/
              <br />
              SHAMT
              <br />
              (Hex)
            </HeadStack>
            <div>OPERATION (in Verilog)</div>
            <HeadNotes>Notes</HeadNotes>
          </HeadRow>
          {rowsOf(ARITH, RIGHT_COLS, true)}
        </RightPage>
      </Sheet>
      <VScroll>
        <VThumb />
      </VScroll>
    </Viewer>
    <HScroll>
      <HTrack>
        <HThumb />
      </HTrack>
      <ScrollCorner />
    </HScroll>
  </Screen>
);

export default App;
